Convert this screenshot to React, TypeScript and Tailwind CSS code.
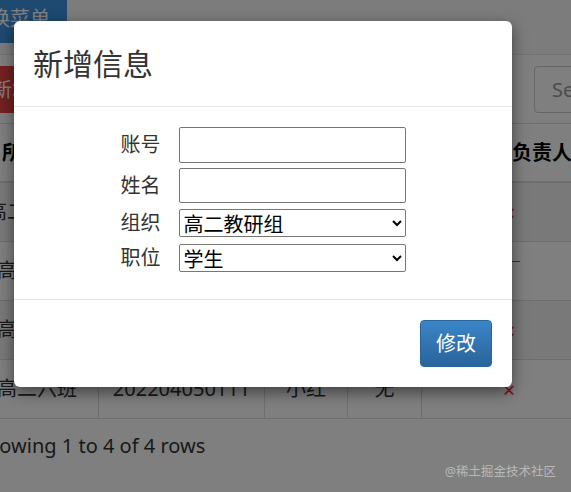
const rows = [
  { cls: "高二十一班", no: "202204050108", name: "小明", has: "有", mark: "×" },
  { cls: "高二三班", no: "202204050109", name: "小刚", has: "有", mark: "√" },
  { cls: "高二五班", no: "202204050110", name: "小李", has: "无", mark: "×" },
  { cls: "高二六班", no: "202204050111", name: "小红", has: "无", mark: "×" },
];

const fields = [
  { label: "账号", type: "input", h: "h-[36px]", mt: "" },
  { label: "姓名", type: "input", h: "h-[35px]", mt: "mt-[5px]" },
];

const App = () => {
  return (
    <div
      className="relative h-[492px] w-[571px] overflow-hidden bg-white text-[#333]"
      style={{ fontFamily: "'Noto Sans', 'Noto Sans CJK SC', sans-serif" }}
    >
      {/* 背后的页面 */}
      <div className="-mt-[6px] -ml-[24px] w-[700px]">
        <div className="h-[61px] border-b border-[#e7e7e7] bg-[#f8f8f8]">
          <button className="-ml-[23px] h-[49px] bg-[#3d92e0] px-[17px] text-[20px] text-white">
            切换菜单
          </button>
        </div>

        <div className="mt-[11px] flex items-center">
          <button className="h-[47px] bg-[#e84040] px-[16px] text-[20px] text-white">
            新增班级
          </button>
          <div className="ml-auto flex h-[47px] w-[142px] items-center rounded-[4px] border border-[#ccc] pl-[17px] text-[20px] text-[#999]">
            Search
          </div>
        </div>

        <div className="mt-[10px] w-[646px]">
          <div className="grid h-[60px] grid-cols-[123px_166px_83px_74px_200px] border-t border-b-2 border-[#ddd] text-[20px] font-bold text-black">
            <div className="flex items-center justify-center border-r border-[#ddd] pl-[10px]">所属班级</div>
            <div className="flex items-center justify-center border-r border-[#ddd]">学号</div>
            <div className="flex items-center justify-center border-r border-[#ddd]">姓名</div>
            <div className="flex items-center justify-center border-r border-[#ddd]">班干</div>
            <div className="flex items-center justify-center">主要负责人</div>
          </div>
          {rows.map((r, i) => (
            <div
              key={r.no}
              className={`grid h-[59px] grid-cols-[123px_166px_83px_74px_200px] border-b border-[#ddd] text-[20px] ${
                i % 2 === 0 ? "bg-[#f2f2f2]" : "bg-white"
              }`}
            >
              <div className="flex items-center justify-center overflow-hidden whitespace-nowrap border-r border-[#ddd]">{r.cls}</div>
              <div className="flex items-center justify-center border-r border-[#ddd]">{r.no}</div>
              <div className="flex items-center justify-center border-r border-[#ddd]">{r.name}</div>
              <div className="flex items-center justify-center border-r border-[#ddd]">{r.has}</div>
              <div
                className={`flex items-center justify-center pr-[26px] text-[22px] ${
                  r.mark === "√" ? "text-[#2f8a3a]" : "text-[#ff2a2a]"
                }`}
              >
                {r.mark}
              </div>
            </div>
          ))}
        </div>

        <div className="mt-[13px] text-[20px] leading-[28px]">Showing 1 to 4 of 4 rows</div>
      </div>

      {/* 遮罩 */}
      <div className="absolute inset-0 bg-black/50" />

      {/* 弹窗 */}
      <div className="absolute top-[21px] left-[14px] w-[498px] rounded-[6px] bg-white shadow-[0_5px_15px_rgba(0,0,0,0.5)]">
        <div className="flex h-[86px] items-center border-b border-[#e5e5e5] px-[19px]">
          <h4 className="text-[30px] leading-none font-normal text-[#333]">新增信息</h4>
        </div>

        <div className="flex justify-center pt-[20px] pb-[27px]">
          <div className="flex flex-col">
            {fields.map((f) => (
              <div key={f.label} className={`flex items-center gap-[18px] ${f.mt}`}>
                <span className="w-[40px] text-[20px] leading-none">{f.label}</span>
                <input
                  className={`${f.h} w-[227px] rounded-[2px] border border-[#767676] bg-white px-[3px] text-[20px] outline-none`}
                />
              </div>
            ))}
            <div className="mt-[6px] flex items-center gap-[18px]">
              <span className="w-[40px] text-[20px] leading-none">组织</span>
              <select className="h-[28px] w-[227px] rounded-[2px] border border-[#767676] bg-white text-[20px] leading-[26px] text-black">
                <option>高二教研组</option>
                <option>高一教研组</option>
              </select>
            </div>
            <div className="mt-[7px] flex items-center gap-[18px]">
              <span className="w-[40px] text-[20px] leading-none">职位</span>
              <select className="h-[28px] w-[227px] rounded-[2px] border border-[#767676] bg-white text-[20px] leading-[26px] text-black">
                <option>学生</option>
                <option>教师</option>
              </select>
            </div>
          </div>
        </div>

        <div className="flex justify-end border-t border-[#e5e5e5] p-[20px]">
          <button className="h-[47px] rounded-[4px] border border-[#2b669a] bg-linear-to-b from-[#3b86c8] to-[#29639b] px-[15px] text-[20px] text-white">
            修改
          </button>
        </div>
      </div>

      <div className="absolute right-[15px] bottom-[14px] text-[12.5px] leading-none text-[#b8b8b8]">
        @稀土掘金技术社区
      </div>
    </div>
  );
};

export default App;
